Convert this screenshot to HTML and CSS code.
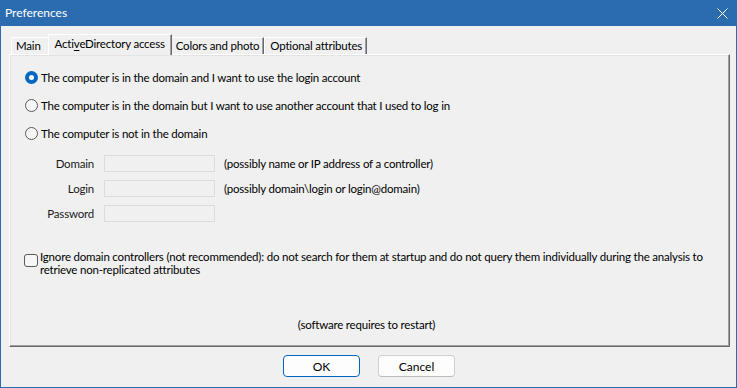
FILE: index.html
```html
<!DOCTYPE html>
<html lang="en">
<head>
  <meta charset="UTF-8" />
  <title>Preferences</title>
  <link rel="stylesheet" href="styles.css">
</head>
<body>
  <div class="window">
    <!-- Title bar -->
    <div class="titlebar">
      <span class="title">Preferences</span>
      <svg class="close" width="11" height="11" viewBox="0 0 11 11">
        <path d="M0.5 0.5 L10.5 10.5 M10.5 0.5 L0.5 10.5" stroke="#fff" stroke-width="1" fill="none" />
      </svg>
    </div>

    <div class="content">
      <!-- Tabs -->
      <div class="tabs">
        <div class="tab tab-main">Main</div>
        <div class="tab active">Acti<u>v</u>eDirectory access</div>
        <div class="tab">Colors and photo</div>
        <div class="tab">Optional attributes</div>
      </div>

      <div class="panel">
        <div class="radio-row">
          <span class="radio checked"></span>
          <span>The computer is in the domain and I want to use the login account</span>
        </div>
        <div class="radio-row">
          <span class="radio"></span>
          <span>The computer is in the domain but I want to use another account that I used to log in</span>
        </div>
        <div class="radio-row">
          <span class="radio"></span>
          <span>The computer is not in the domain</span>
        </div>

        <div class="fields">
          <label class="field-label">Domain</label>
          <div class="field-input"></div>
          <span class="field-hint">(possibly name or IP address of a controller)</span>

          <label class="field-label">Login</label>
          <div class="field-input"></div>
          <span class="field-hint">(possibly domain\login or login@domain)</span>

          <label class="field-label">Password</label>
          <div class="field-input"></div>
          <span class="field-hint"></span>
        </div>

        <div class="check-row">
          <span class="checkbox"></span>
          <span class="check-text">Ignore domain controllers (not recommended): do not search for them at startup and do not query them individually during the analysis to<br>retrieve non-replicated attributes</span>
        </div>

        <div class="restart-note">(software requires to restart)</div>
      </div>

      <!-- Dialog buttons -->
      <div class="buttons">
        <button class="btn btn-default">OK</button>
        <button class="btn">Cancel</button>
      </div>
    </div>
  </div>
</body>
</html>
```

FILE: styles.css
```css
body {
  margin: 0;
  padding: 0;
  font-family: Lato, "Noto Sans", sans-serif;
  font-size: 11.5px;
  letter-spacing: -0.2px;
  color: #000;
  background: #f0f0f0;
}

.window {
  width: 737px;
  height: 388px;
  box-sizing: border-box;
  border: 1px solid #2b6cb0;
  border-top: none;
  background: #f0f0f0;
  display: flex;
  flex-direction: column;
}

.titlebar {
  height: 26px;
  flex: none;
  background: #2b6cb0;
  color: #fff;
  display: flex;
  align-items: center;
  justify-content: space-between;
  padding: 0 9px 0 5px;
  margin: 0 -1px;
  font-size: 12px;
  letter-spacing: 0;
}

.title {
  line-height: 16px;
}

.close {
  display: block;
}

.content {
  flex: 1;
  display: flex;
  flex-direction: column;
  padding: 8px 6px 0 8px;
}

.tabs {
  display: flex;
  align-items: flex-end;
  height: 20px;
  padding-left: 2px;
}

.tab {
  box-sizing: border-box;
  height: 17px;
  line-height: 15px;
  padding: 0 4px 0 5px;
  border-top: 1px solid #fff;
  border-left: 1px solid #fff;
  border-right: 1px solid #696969;
  box-shadow: inset -1px 0 #a0a0a0;
  white-space: nowrap;
}

.tab-main {
  padding-left: 4px;
  padding-right: 8px;
}

.tab.active {
  position: relative;
  z-index: 1;
  height: 21px;
  margin: 0 -2px -1px;
  padding: 0 6px 3px;
  line-height: 17px;
  background: #f0f0f0;
}

.tab.active u {
  text-underline-offset: 2px;
}

.panel {
  box-sizing: border-box;
  height: 293px;
  border-top: 1px solid #fff;
  border-left: 1px solid #fff;
  border-right: 1px solid #696969;
  border-bottom: 1px solid #696969;
  box-shadow: inset -1px -1px #a0a0a0, inset 1px 1px #e3e3e3;
  padding: 8px 0 0 15px;
  display: flex;
  flex-direction: column;
}

.radio-row {
  height: 28px;
  display: flex;
  align-items: center;
  gap: 3px;
  white-space: nowrap;
}

.radio {
  box-sizing: border-box;
  width: 13px;
  height: 13px;
  border-radius: 50%;
  border: 1px solid #5a5a5a;
  background: #f6f6f6;
  flex: none;
}

.radio.checked {
  border: 4px solid #0067c0;
  background: #fff;
}

.fields {
  display: grid;
  grid-template-columns: 69px 111px auto;
  grid-auto-rows: 17px;
  column-gap: 10px;
  row-gap: 8px;
  margin-top: 8px;
  align-items: center;
}

.field-label {
  text-align: right;
  color: #1a1a1a;
}

.field-input {
  box-sizing: border-box;
  height: 17px;
  border: 1px solid #dcdcdc;
  background: #f0f0f0;
}

.field-hint {
  margin-left: -1px;
  white-space: nowrap;
}

.check-row {
  display: flex;
  align-items: flex-start;
  gap: 2px;
  margin-top: 28px;
  margin-left: -1px;
}

.checkbox {
  box-sizing: border-box;
  width: 14px;
  height: 13px;
  margin-top: 4px;
  border: 1px solid #5a5a5a;
  border-radius: 3px;
  background: #f6f6f6;
  flex: none;
}

.check-text {
  line-height: 13px;
  white-space: nowrap;
}

.restart-note {
  margin-top: auto;
  margin-bottom: 13px;
  padding-right: 21px;
  line-height: 16px;
  text-align: center;
}

.buttons {
  display: flex;
  justify-content: center;
  gap: 18px;
  margin-top: 8px;
  padding-right: 1px;
}

.btn {
  box-sizing: border-box;
  width: 77px;
  height: 22px;
  padding: 0;
  font-family: inherit;
  font-size: 12px;
  color: #000;
  background: #fdfdfd;
  border: 1px solid #d0d0d0;
  border-bottom-color: #bcbcbc;
  border-radius: 4px;
}

.btn-default {
  border: 1px solid #0067c0;
  box-shadow: inset 0 0 0 1px #fdfdfd;
}
```
